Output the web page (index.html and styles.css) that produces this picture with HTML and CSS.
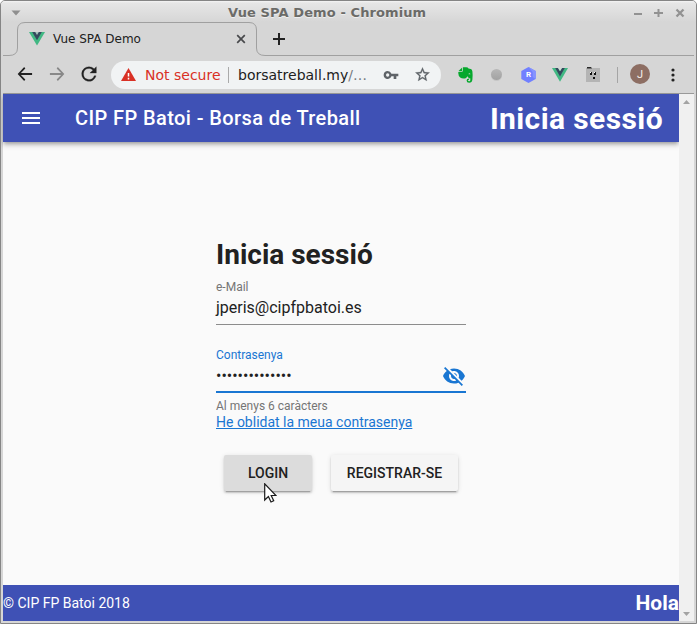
FILE: index.html
```html
<!DOCTYPE html>
<html lang="ca">
<head>
<meta charset="utf-8">
<title>Vue SPA Demo</title>
<link rel="stylesheet" href="styles.css">
</head>
<body>
<div class="window">
  <header class="titlebar">
    <svg class="win-menu" width="10" height="6" viewBox="0 0 10 6"><path d="M.5.5h9L5 5.5z" fill="#8f8f8f"/></svg>
    <span class="win-title">Vue SPA Demo - Chromium</span>
    <svg class="win-controls" width="52" height="12" viewBox="0 0 52 12" fill="none" stroke="#929292" stroke-width="2"><path d="M0 7h8M20 6h9M24.500 2v8"/><path d="M42.500 2.500l7 7M49.500 2.500l-7 7" stroke-width="2.300"/></svg>
  </header>
  <nav class="tabs">
    <svg class="tab-outline" width="691" height="36" viewBox="0 0 691 36" fill="none" stroke="#a0a0a0"><path d="M0 33.500H6Q14.500 33.500 14.500 26V8Q14.500.500 22 .500H246Q253.500.500 253.500 8V26Q253.500 33.500 262 33.500H691"/></svg>
    <svg class="favicon" width="16" height="14" viewBox="0 0 16 14"><path d="M0 0h16L8 13.500z" fill="#41b883"/><path d="M3.200 0h9.600L8 8.200z" fill="#35495e"/><path d="M6.200 0h3.600L8 3z" fill="#a9c4bd"/></svg>
    <span class="tab-title">Vue SPA Demo</span>
    <svg class="tab-close" width="10" height="10" viewBox="0 0 10 10"><path d="M1.200 1.200l7.600 7.600M8.800 1.200L1.200 8.800" stroke="#48494c" stroke-width="1.700"/></svg>
    <svg class="tab-new" width="12" height="12" viewBox="0 0 12 12"><path d="M6 0v12M0 6h12" stroke="#222" stroke-width="2"/></svg>
  </nav>
  <div class="toolbar">
    <svg class="back" width="20" height="20" viewBox="0 0 24 24"><path d="M20.500 10.800H7.100l5.300-5.300L11 3.700 3.200 12l7.800 8.300 1.400-1.800L7.100 13.200h13.400z" fill="#222"/></svg>
    <svg class="forward" width="20" height="20" viewBox="0 0 24 24"><path d="M3.500 10.800h13.400l-5.300-5.300L13 3.700l7.800 8.300-7.800 8.300-1.400-1.800 5.300-5.300H3.500z" fill="#888"/></svg>
    <svg class="reload" width="22" height="22" viewBox="0 0 24 24"><path d="M17.650 6.350A7.960 7.960 0 0 0 12 4a8 8 0 1 0 7.730 10h-2.080A6 6 0 1 1 12 6c1.660 0 3.140.69 4.220 1.780L13 11h7V4z" fill="#222" stroke="#222" stroke-width=".3"/></svg>
    <div class="omnibox">
      <svg class="warn" width="15" height="13" viewBox="0 0 15 13"><path d="M7.500 0L15 13H0z" fill="#d93025"/><path d="M7.500 5v3.500M7.500 9.700v1.700" stroke="#fff" stroke-width="1.500"/></svg>
      <span class="insecure">Not secure</span>
      <span class="divider"></span>
      <span class="url">borsatreball.my<span class="path">/…</span></span>
      <svg class="key" width="16" height="16" viewBox="0 0 24 24"><path d="M12.650 10A6 6 0 0 0 7 6a6 6 0 1 0 5.650 8H16v4h4v-4h3v-4zM7 14.500a2.500 2.500 0 1 1 0-5 2.500 2.500 0 0 1 0 5z" fill="#5f6368"/></svg>
      <svg class="star" width="17" height="17" viewBox="0 0 24 24"><path d="M22 9.240l-7.190-.62L12 2 9.190 8.630 2 9.240l5.460 4.730L5.820 21 12 17.270 18.180 21l-1.630-7.030zM12 15.400l-3.760 2.270 1-4.280-3.320-2.880 4.380-.38L12 6.100l1.710 4.040 4.380.38-3.320 2.880 1 4.280z" fill="#5f6368" stroke="#5f6368" stroke-width=".4"/></svg>
    </div>
    <svg class="elephant" width="16" height="16" viewBox="0 0 16 16"><path d="M5 .3h3.200q1.800 0 2.300 1.100l2.200.5q1.500.4 1.700 2.600.5 3.800 0 8-.4 3.200-3.200 3.200-2.600 0-2.600-2.200 0-2 2.300-2v1.400q-1.100 0-1.100.7t1.300.7q1.500 0 1.300-2.800l-1.400-.3q-.9-1-1.700-2-.7 2-2.200 2.200-3.300.4-4.900-1Q.3 9 .2 5.800q0-1 1-1h2.500q1.300 0 1.300-1.300z" fill="#06a82d"/><path d="M.5 4L4.200.4V4z" fill="#06a82d"/><path d="M10.500 6.700q1.300-1.300 2 .6l-1.900-.1z" fill="#d6d6d6"/></svg>
    <span class="gray-ball"></span>
    <span class="hex"><svg width="15" height="16" viewBox="0 0 15 16"><path d="M7.500 0L14.700 4v8L7.500 16 .3 12V4z" fill="#7180ff"/><path d="M7.500 0l7.200 4v8l-3-2V5z" fill="#8793ff"/></svg><span class="hex-letter">R</span></span>
    <svg class="vue" width="16" height="14" viewBox="0 0 16 14"><path d="M0 0h16L8 13.800z" fill="#41b883"/><path d="M3.200 0H6l2 3.300L10 0h2.800L8 8.500z" fill="#35495e"/><path d="M6 0h4L8 3.300z" fill="#d6d6d6"/></svg>
    <svg class="folder" width="14" height="15" viewBox="0 0 14 15"><path d="M0 1h14v14H0z" fill="#b4b4b4"/><path d="M1 0h4l1 1.500H1z" fill="#292929"/><path d="M4 5h2v3H4zM8 5h2v3H8zM7 10h2v2H7z" fill="#111"/><path d="M4 5h1v1H4zM8 5h1v1H8z" fill="#fff"/></svg>
    <span class="tool-divider"></span>
    <span class="avatar">J</span>
    <svg class="dots" width="4" height="14" viewBox="0 0 4 14" fill="#222"><circle cx="2" cy="2" r="1.600"/><circle cx="2" cy="7" r="1.600"/><circle cx="2" cy="12" r="1.600"/></svg>
  </div>
  <div class="viewport">
    <div class="app">
      <header class="app-bar">
        <svg class="burger" width="18" height="12" viewBox="0 0 18 12"><path d="M0 1h18M0 6h18M0 11h18" stroke="#fff" stroke-width="2"/></svg>
        <span class="brand">CIP FP Batoi - Borsa de Treball</span>
        <h1 class="page-name">Inicia sessió</h1>
      </header>
      <main class="content">
        <form class="login">
          <h2 class="heading">Inicia sessió</h2>
          <span class="label">e-Mail</span>
          <div class="field"><span class="value">jperis@cipfpbatoi.es</span></div>
          <span class="label label-active">Contrasenya</span>
          <div class="field field-active">
            <span class="value password">••••••••••••••</span>
            <svg class="eye" width="24" height="24" viewBox="0 0 24 24"><path d="M12 7c2.760 0 5 2.240 5 5 0 .65-.13 1.260-.36 1.830l2.920 2.920c1.510-1.260 2.700-2.890 3.430-4.750-1.730-4.390-6-7.500-11-7.500-1.400 0-2.740.25-3.980.7l2.160 2.160C10.740 7.130 11.350 7 12 7zM2 4.270l2.280 2.280.46.46C3.080 8.300 1.780 10.020 1 12c1.730 4.390 6 7.500 11 7.500 1.550 0 3.030-.3 4.380-.84l.42.42L19.730 22 21 20.730 3.270 3zM7.530 9.800l1.550 1.550c-.05.21-.08.43-.08.65 0 1.660 1.340 3 3 3 .22 0 .44-.03.65-.08l1.550 1.550c-.67.33-1.410.53-2.200.53-2.760 0-5-2.240-5-5 0-.79.2-1.530.53-2.200zm4.310-.78l3.150 3.150.02-.16c0-1.660-1.340-3-3-3z" fill="#1976d2"/></svg>
          </div>
          <span class="hint">Al menys 6 caràcters</span>
          <a class="forgot">He oblidat la meua contrasenya</a>
          <div class="actions"><span class="btn btn-login">LOGIN</span><span class="btn btn-register">REGISTRAR-SE</span></div>
          <svg class="cursor" width="13" height="20" viewBox="0 0 13 20"><path d="M.7.800v16.200l3.700-3.500 2.600 5.500 2.700-1.200-2.500-5.300h4.800z" fill="#fff" stroke="#1a1a1a" stroke-width="1.200"/></svg>
        </form>
      </main>
      <footer class="app-footer"><span class="copyright">© CIP FP Batoi 2018</span><span class="hello">Hola</span></footer>
    </div>
    <div class="scrollbar">
      <svg width="7" height="4" viewBox="0 0 7 4"><path d="M0 4h7L3.500 0z" fill="#a3a3a3"/></svg>
      <svg width="7" height="4" viewBox="0 0 7 4"><path d="M0 0h7L3.500 4z" fill="#a3a3a3"/></svg>
    </div>
  </div>
</div>
</body>
</html>
```
FILE: styles.css
```css
* { box-sizing: border-box; }
body { margin: 0; background: #fff; overflow: hidden; font-family: Roboto, sans-serif; color: #212121; }
svg { display: block; flex: none; }
span, h1, h2 { white-space: nowrap; }
.window { width: 697px; height: 624px; display: flex; flex-direction: column; background: #d6d6d6; border: 1px solid #858585; border-radius: 5px 5px 0 0; padding: 0 2px 2px; overflow: hidden; }
.titlebar { height: 21px; margin: 0 -2px; flex: none; display: flex; align-items: center; background: linear-gradient(#f5f5f5 0, #e6e6e6 2px, #d6d6d6); padding: 2px 10px 0 10px; }
.win-title { margin-left: 207px; font: bold 13px/18px "DejaVu Sans", sans-serif; letter-spacing: .1px; color: #6b6b68; text-shadow: 0 1px #eee; }
.win-controls { margin-left: auto; }
.tabs { position: relative; height: 34px; flex: none; display: flex; align-items: center; }
.tab-outline { position: absolute; left: 0; top: 0; }
.favicon { margin-left: 26px; }
.tab-title { font: 12px/18px "DejaVu Sans", sans-serif; width: 179px; margin-left: 8px; }
.tab-close { margin-left: 4px; }
.tab-new { margin-left: 27px; }
.toolbar { height: 38px; flex: none; display: flex; align-items: center; border-bottom: 1px solid #999; }
.back { margin-left: 12px; margin-bottom: 1px; }
.forward { margin-left: 12px; margin-bottom: 1px; }
.reload { margin-left: 11px; margin-bottom: 1px; }
.omnibox { width: 330px; height: 28px; margin-left: 11px; border-radius: 14px; background: #f1f3f4; display: flex; align-items: center; flex: none; font: 15px/24px "DejaVu Sans", sans-serif; }
.warn { margin-left: 10px; }
.insecure { width: 75px; margin-left: 9px; color: #d93025; font-size: 14px; }
.divider { width: 1px; height: 16px; margin-left: 8px; background: #aaa; }
.url { width: 135px; margin-left: 9px; font-size: 14px; }
.path { color: #777b80; }
.key { margin-left: 10px; }
.star { margin-left: 15px; }
.elephant { margin-left: 17px; }
.gray-ball { width: 11px; height: 11px; margin-left: 17px; border-radius: 50%; background: linear-gradient(#b7b7b7, #a2a2a2); box-shadow: 0 1px #c6c6c6; }
.hex { margin-left: 19px; display: grid; place-items: center; }
.hex svg, .hex-letter { grid-area: 1 / 1; }
.hex-letter { color: #fff; font: bold 8px/10px Roboto, sans-serif; }
.vue { margin-left: 16px; }
.folder { margin-left: 18px; }
.tool-divider { width: 1px; height: 16px; margin-left: 17px; background: #a5a5a5; }
.avatar { width: 20px; height: 20px; margin-left: 12px; margin-bottom: 1px; border-radius: 50%; background: #8d6e63; color: #f6efec; font: 11px/21px Roboto, sans-serif; text-align: center; }
.dots { margin-left: 21px; }
.viewport { flex: 1; display: flex; min-height: 0; }
.app { width: 676px; display: flex; flex-direction: column; background: #fafafa; }
.app-bar { height: 48px; flex: none; display: flex; align-items: center; padding: 0 16px 0 19px; background: #3f51b5; color: #fff; box-shadow: 0 2px 4px -1px #0005, 0 4px 5px #0002; }
.brand { margin-left: 35px; font-size: 20px; font-weight: 500; letter-spacing: .4px; }
.page-name { margin: 2px 0 0 auto; font-size: 30px; line-height: 36px; font-weight: 700; letter-spacing: .4px; }
.content { flex: 1; padding: 94px 0 0 213px; }
.login { position: relative; width: 250px; display: flex; flex-direction: column; }
.heading { margin: 0; font-size: 28px; line-height: 38px; font-weight: 700; }
.label { font-size: 12px; line-height: 14px; margin-top: 6px; color: #757575; }
.field { height: 31px; display: flex; align-items: center; padding-bottom: 2px; border-bottom: 1px solid #8c8c8c; }
.value { font-size: 16px; line-height: 24px; }
.label-active { color: #1976d2; margin-top: 23px; }
.field-active { border-bottom: 2px solid #1976d2; justify-content: space-between; }
.hint { margin-top: 6px; font-size: 12px; line-height: 14px; color: #757575; }
.forgot { font-size: 14px; line-height: 18px; color: #1976d2; text-decoration: underline; white-space: nowrap; }
.actions { display: flex; gap: 19px; margin: 24px 0 0 8px; }
.btn { height: 36px; border-radius: 2px; font-size: 14px; line-height: 36px; font-weight: 500; text-align: center; box-shadow: 0 3px 1px -2px #0003, 0 2px 2px #00000024, 0 1px 5px #0000001f; }
.btn-login { width: 88px; background: #dcdcdc; }
.btn-register { width: 127px; background: #f5f5f5; }
.cursor { position: absolute; left: 48px; top: 247px; }
.app-footer { height: 36px; flex: none; display: flex; align-items: center; justify-content: space-between; background: #3f51b5; color: #fff; }
.copyright { font-size: 14px; }
.hello { font-size: 21px; font-weight: 700; }
.scrollbar { width: 15px; background: #f0f0f0; display: flex; flex-direction: column; justify-content: space-between; align-items: center; padding: 6px 0 5px; }
```
